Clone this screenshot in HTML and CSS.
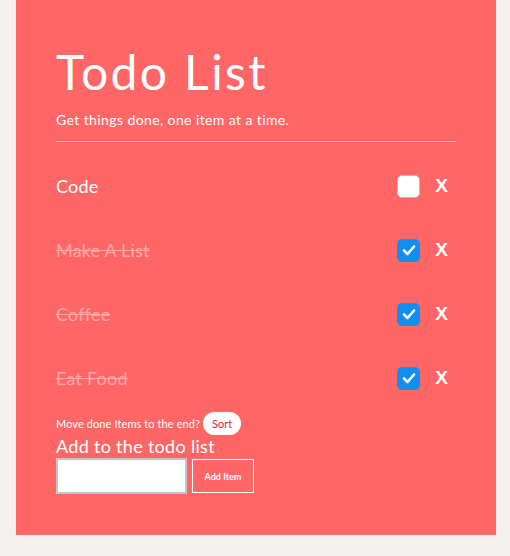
FILE: index.html
```html
<!DOCTYPE html>
<html>
<head>
<meta charset="utf-8">
<link rel="stylesheet" href="styles.css">
</head>
<body>
<div class="card">
  <h1 class="title">Todo List</h1>
  <p class="subtitle">Get things done, one item at a time.</p>
  <div class="divider"></div>
  <ul class="list">
    <li class="item"><span class="name">Code</span><span class="check"></span><span class="remove">X</span></li>
    <li class="item done"><span class="name">Make A List</span><span class="check on"><svg viewBox="0 0 22 22" width="22" height="22"><path d="M6 11.5 L9.5 15 L16 7.5" fill="none" stroke="#fff" stroke-width="2.6" stroke-linecap="round" stroke-linejoin="round"/></svg></span><span class="remove">X</span></li>
    <li class="item done"><span class="name">Coffee</span><span class="check on"><svg viewBox="0 0 22 22" width="22" height="22"><path d="M6 11.5 L9.5 15 L16 7.5" fill="none" stroke="#fff" stroke-width="2.6" stroke-linecap="round" stroke-linejoin="round"/></svg></span><span class="remove">X</span></li>
    <li class="item done"><span class="name">Eat Food</span><span class="check on"><svg viewBox="0 0 22 22" width="22" height="22"><path d="M6 11.5 L9.5 15 L16 7.5" fill="none" stroke="#fff" stroke-width="2.6" stroke-linecap="round" stroke-linejoin="round"/></svg></span><span class="remove">X</span></li>
  </ul>
  <div class="sortline"><span>Move done Items to the end?</span><button class="sort">Sort</button></div>
  <div class="addlabel">Add to the todo list</div>
  <div class="addrow"><input class="field" type="text"><button class="addbtn">Add Item</button></div>
</div>
</body>
</html>
```
FILE: styles.css
```css
html, body {
  margin: 0;
  padding: 0;
  background: #f5f0f0;
}
body {
  font-family: "Lato", "Noto Sans", sans-serif;
  color: #fff;
}
.card {
  box-sizing: border-box;
  width: 480px;
  height: 535px;
  margin-left: 16px;
  background: #ff6666;
  padding: 44px 40px 0 40px;
}
.title {
  margin: 0;
  font-size: 48px;
  font-weight: 400;
  line-height: 56px;
  letter-spacing: 2.4px;
}
.subtitle {
  margin: 11px 0 0 0;
  font-size: 14px;
  line-height: 18px;
  letter-spacing: 0.4px;
}
.divider {
  margin-top: 12px;
  height: 1px;
  background: #ffb3b3;
}
.list {
  list-style: none;
  margin: 12px 0 0 0;
  padding: 0;
}
.item {
  display: flex;
  align-items: center;
  height: 64px;
}
.name {
  flex: 1;
  font-size: 18px;
  letter-spacing: 0.2px;
}
.done .name {
  color: #ffa8a8;
  text-decoration: line-through;
}
.check {
  box-sizing: border-box;
  width: 23px;
  height: 23px;
  border-radius: 5px;
  background: #fff;
  border: 1.5px solid #b9b9b9;
  display: flex;
  align-items: center;
  justify-content: center;
}
.check.on {
  background: #0f8ff5;
  border: none;
}
.remove {
  margin-left: 15px;
  margin-right: 8px;
  font-family: "Liberation Sans", sans-serif;
  font-size: 19px;
  font-weight: 700;
}
.sortline {
  display: flex;
  align-items: center;
  gap: 3px;
  font-size: 11px;
  letter-spacing: 0.1px;
  height: 24px;
  margin-top: 1px;
}
.sort {
  font-family: "Lato", sans-serif;
  font-size: 11px;
  color: #f0103a;
  background: #fff;
  border: none;
  border-radius: 12px;
  height: 23px;
  padding: 0 9px;
}
.addlabel {
  font-size: 18px;
  line-height: 20px;
  margin-top: 1px;
  letter-spacing: 0.3px;
}
.addrow {
  display: flex;
  align-items: center;
  gap: 5px;
  margin-top: 2px;
}
.field {
  box-sizing: border-box;
  width: 131px;
  height: 36px;
  margin: 0;
  border: 2px solid #c4c4c4;
  background: #fff;
}
.addbtn {
  box-sizing: border-box;
  width: 62px;
  height: 34px;
  background: transparent;
  border: 1px solid #fff;
  color: #fff;
  font-family: "Lato", sans-serif;
  font-size: 9px;
  font-weight: 700;
  padding: 0;
}
```
